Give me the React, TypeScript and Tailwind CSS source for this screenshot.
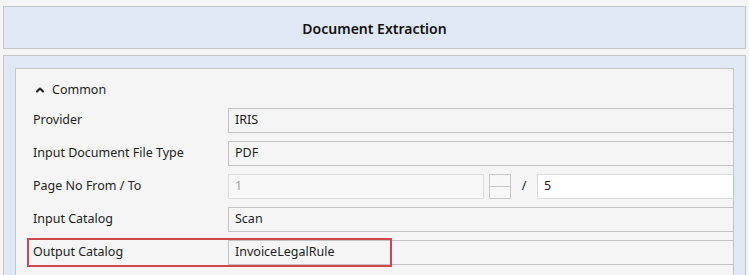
import { ChevronUp } from "lucide-react"

const rows = [
  { label: "Provider", value: "IRIS" },
  { label: "Input Document File Type", value: "PDF" },
]

const rows2 = [{ label: "Input Catalog", value: "Scan" }]

function Field({ value }: { value: string }) {
  return (
    <div className="flex h-[25px] flex-1 items-center border border-r-0 border-[#c3c3c3] bg-[#f5f5f5] pl-[6px] text-[12.5px] text-[#1e1e1e]">
      {value}
    </div>
  )
}

function Row({ label, value }: { label: string; value: string }) {
  return (
    <div className="flex h-[33px] items-center">
      <div className="w-[212px] shrink-0 pl-[17px] text-[12.5px] text-[#1e1e1e]">{label}</div>
      <Field value={value} />
    </div>
  )
}

export default function App() {
  return (
    <div
      className="h-[275px] w-[749px] overflow-hidden bg-[#f5f5f5] px-[3px] pt-[6px]"
      style={{ fontFamily: '"Noto Sans", "Open Sans", sans-serif' }}
    >
      <div className="flex h-[43px] items-center justify-center border border-[#c6c6c6] bg-[#dfe8f4] pt-[2px] text-[14px] font-semibold text-[#111]">
        Document Extraction
      </div>

      <div className="mt-[6px] h-[260px] border border-[#c6c6c6] bg-[#dfe8f4] px-[11px] pt-[12px]">
        <div className="h-full overflow-hidden border border-[#c6c6c6] bg-[#f5f5f5]">
          <div className="flex h-[35px] items-center pl-[18px] pt-[7px] text-[12.5px] text-[#1e1e1e]">
            <ChevronUp className="h-[12px] w-[12px]" strokeWidth={4} />
            <span className="ml-[6px]">Common</span>
          </div>

          {rows.map((r) => (
            <Row key={r.label} label={r.label} value={r.value} />
          ))}

          <div className="flex h-[33px] items-center">
            <div className="w-[212px] shrink-0 pl-[17px] text-[12.5px] text-[#1e1e1e]">Page No From / To</div>
            <div className="flex h-[25px] w-[256px] items-center border border-[#dcdcdc] bg-[#f8f8f8] pl-[6px] text-[12.5px] text-[#a0a0a0]">
              1
            </div>
            <div className="ml-[5px] flex h-[25px] w-[22px] flex-col border border-[#c8c8c8]">
              <div className="flex-1 border-b border-[#c8c8c8] bg-[#f7f7f7]" />
              <div className="flex-1 bg-[#f7f7f7]" />
            </div>
            <div className="w-[26px] text-center text-[12.5px] text-[#1e1e1e]">/</div>
            <div className="flex h-[25px] flex-1 items-center border border-r-0 border-[#dcdcdc] bg-white pl-[6px] text-[12.5px] text-[#1e1e1e]">
              5
            </div>
          </div>

          {rows2.map((r) => (
            <Row key={r.label} label={r.label} value={r.value} />
          ))}

          <div className="relative">
            <Row label="Output Catalog" value="InvoiceLegalRule" />
            <div className="pointer-events-none absolute left-[11px] top-[2px] h-[29px] w-[365px] border-2 border-[#d0484c]" />
          </div>
        </div>
      </div>
    </div>
  )
}
